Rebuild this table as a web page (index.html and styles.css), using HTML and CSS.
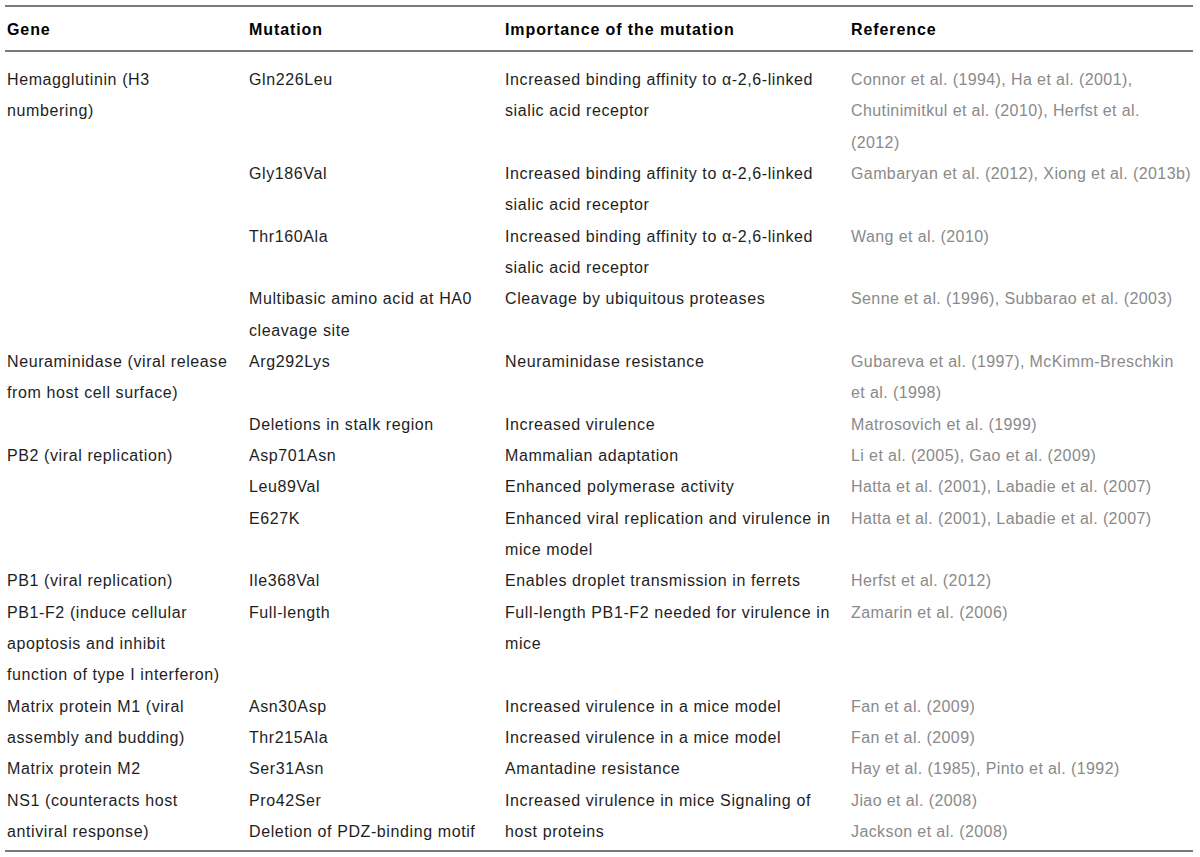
FILE: index.html
```html
<!DOCTYPE html>
<html lang="en">

<head>
    <meta charset="UTF-8">
    <title>Mutations</title>
    <link rel="stylesheet" href="styles.css">
</head>

<body>
    <table class="mut-table">
        <colgroup>
            <col class="col-gene">
            <col class="col-mut">
            <col class="col-imp">
            <col class="col-ref">
        </colgroup>
        <thead>
            <tr>
                <th>Gene</th>
                <th>Mutation</th>
                <th>Importance of the mutation</th>
                <th>Reference</th>
            </tr>
        </thead>
        <tbody>
            <tr class="first">
                <td>Hemagglutinin (H3<br>numbering)</td>
                <td>Gln226Leu</td>
                <td>Increased binding affinity to &alpha;-2,6-linked<br>sialic acid receptor</td>
                <td class="ref">Connor et al. (1994), Ha et al. (2001),<br>Chutinimitkul et al. (2010), Herfst et al.<br>(2012)</td>
            </tr>
            <tr>
                <td></td>
                <td>Gly186Val</td>
                <td>Increased binding affinity to &alpha;-2,6-linked<br>sialic acid receptor</td>
                <td class="ref">Gambaryan et al. (2012), Xiong et al. (2013b)</td>
            </tr>
            <tr>
                <td></td>
                <td>Thr160Ala</td>
                <td>Increased binding affinity to &alpha;-2,6-linked<br>sialic acid receptor</td>
                <td class="ref">Wang et al. (2010)</td>
            </tr>
            <tr>
                <td></td>
                <td>Multibasic amino acid at HA0<br>cleavage site</td>
                <td>Cleavage by ubiquitous proteases</td>
                <td class="ref">Senne et al. (1996), Subbarao et al. (2003)</td>
            </tr>
            <tr>
                <td>Neuraminidase (viral release<br>from host cell surface)</td>
                <td>Arg292Lys</td>
                <td>Neuraminidase resistance</td>
                <td class="ref">Gubareva et al. (1997), McKimm-Breschkin<br>et al. (1998)</td>
            </tr>
            <tr>
                <td></td>
                <td>Deletions in stalk region</td>
                <td>Increased virulence</td>
                <td class="ref">Matrosovich et al. (1999)</td>
            </tr>
            <tr>
                <td>PB2 (viral replication)</td>
                <td>Asp701Asn</td>
                <td>Mammalian adaptation</td>
                <td class="ref">Li et al. (2005), Gao et al. (2009)</td>
            </tr>
            <tr>
                <td></td>
                <td>Leu89Val</td>
                <td>Enhanced polymerase activity</td>
                <td class="ref">Hatta et al. (2001), Labadie et al. (2007)</td>
            </tr>
            <tr>
                <td></td>
                <td>E627K</td>
                <td>Enhanced viral replication and virulence in<br>mice model</td>
                <td class="ref">Hatta et al. (2001), Labadie et al. (2007)</td>
            </tr>
            <tr>
                <td>PB1 (viral replication)</td>
                <td>Ile368Val</td>
                <td>Enables droplet transmission in ferrets</td>
                <td class="ref">Herfst et al. (2012)</td>
            </tr>
            <tr>
                <td>PB1-F2 (induce cellular<br>apoptosis and inhibit<br>function of type I interferon)</td>
                <td>Full-length</td>
                <td>Full-length PB1-F2 needed for virulence in<br>mice</td>
                <td class="ref">Zamarin et al. (2006)</td>
            </tr>
            <tr>
                <td>Matrix protein M1 (viral<br>assembly and budding)</td>
                <td>Asn30Asp<br>Thr215Ala</td>
                <td>Increased virulence in a mice model<br>Increased virulence in a mice model</td>
                <td class="ref">Fan et al. (2009)<br>Fan et al. (2009)</td>
            </tr>
            <tr>
                <td>Matrix protein M2</td>
                <td>Ser31Asn</td>
                <td>Amantadine resistance</td>
                <td class="ref">Hay et al. (1985), Pinto et al. (1992)</td>
            </tr>
            <tr class="last">
                <td>NS1 (counteracts host<br>antiviral response)</td>
                <td>Pro42Ser<br>Deletion of PDZ-binding motif</td>
                <td>Increased virulence in mice Signaling of<br>host proteins</td>
                <td class="ref">Jiao et al. (2008)<br>Jackson et al. (2008)</td>
            </tr>
        </tbody>
    </table>
</body>

</html>
```

FILE: styles.css
```css
body {
    margin: 0;
    background: #fff;
    font-family: "Liberation Sans", Arial, sans-serif;
    color: #1e1e1e;
}

.mut-table {
    width: 1188px;
    margin: 5px 0 0 5px;
    border-collapse: collapse;
    table-layout: fixed;
    border-top: 2px solid #7a7a7a;
    border-bottom: 2px solid #7a7a7a;
    font-size: 16px;
    letter-spacing: 0.6px;
}

.col-gene {
    width: 242px;
}

.col-mut {
    width: 256px;
}

.col-imp {
    width: 346px;
}

th {
    height: 40px;
    padding: 3px 2px 0 2px;
    text-align: left;
    font-weight: bold;
    letter-spacing: 0.9px;
    color: #000;
    border-bottom: 2px solid #7a7a7a;
    vertical-align: middle;
}

td {
    padding: 0 0 0 2px;
    line-height: 31.33px;
    vertical-align: top;
    white-space: nowrap;
}

.first td {
    padding-top: 12px;
}

.last td {
    padding-bottom: 3px;
}

.ref {
    color: #8a8a8a;
    letter-spacing: 0.4px;
}
```
